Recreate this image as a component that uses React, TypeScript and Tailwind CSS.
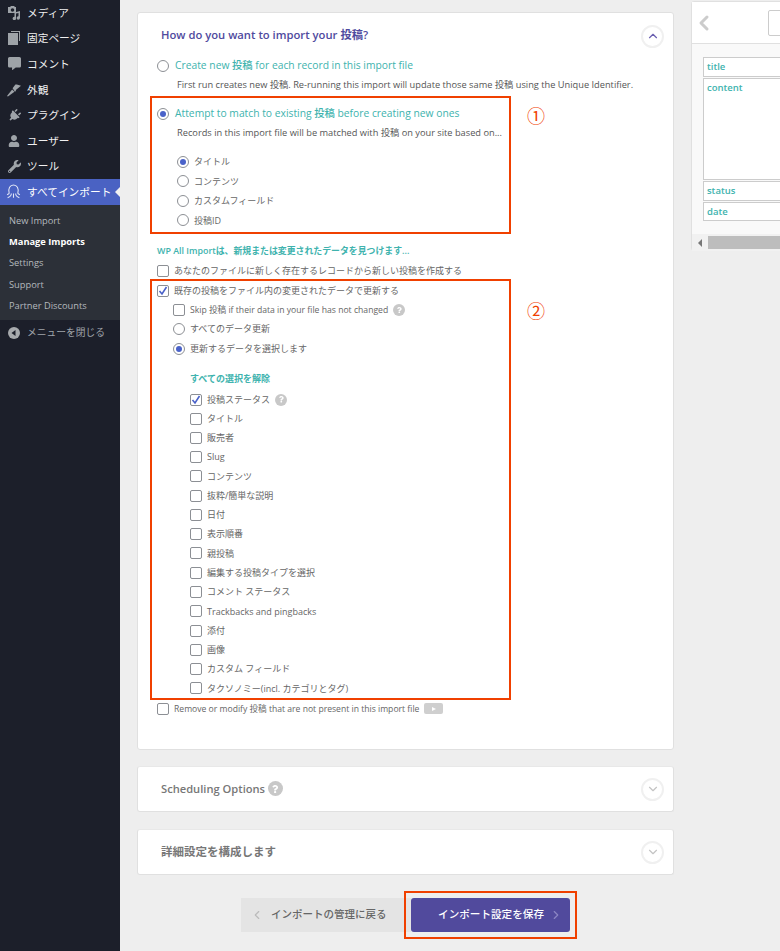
import React from 'react';
import { FaCommentAlt, FaPlug, FaUser, FaWrench, FaQuestion } from 'react-icons/fa';
import { ChevronLeft, ChevronRight, ChevronUp, ChevronDown } from 'lucide-react';

const font = 'font-["Open_Sans","Noto_Sans_CJK_JP",sans-serif]';

const MediaIcon = () => (
  <svg width="14" height="14" viewBox="0 0 14 14" fill="currentColor">
    <path fillRule="evenodd" d="M1 1h2l1-1h3l1 1h1v6H1zM5.500 2.200a1.800 1.800 0 1 0 0 3.600 1.800 1.800 0 0 0 0-3.600z" />
    <path d="M13 5v7a1.700 1.700 0 1 1-1.500-1.700V7L9 7.600v4.900A1.700 1.700 0 1 1 7.500 10.800V6.500z" />
  </svg>
);

const PagesIcon = () => (
  <svg width="14" height="14" viewBox="0 0 14 14" fill="currentColor">
    <path d="M4 0h9v10h-1V1H4z" />
    <path d="M1 2h10v12H1z" />
  </svg>
);

const BrushIcon = () => (
  <svg width="15" height="14" viewBox="0 0 15 14" fill="currentColor">
    <path d="M0 13.500l5.500-7 2.500 2.500-7 5z" />
    <path d="M6 5l3-4 1.500 0 4.500 1.500-5.500 4.500 0 1-1 1z" />
  </svg>
);

const menuItems = [
  { label: 'メディア', icon: <MediaIcon /> },
  { label: '固定ページ', icon: <PagesIcon /> },
  { label: 'コメント', icon: <FaCommentAlt size={13} /> },
  { label: '外観', icon: <BrushIcon /> },
  { label: 'プラグイン', icon: <FaPlug size={13} className="rotate-45" /> },
  { label: 'ユーザー', icon: <FaUser size={12} /> },
  { label: 'ツール', icon: <FaWrench size={13} /> },
];

const subItems = ['New Import', 'Manage Imports', 'Settings', 'Support', 'Partner Discounts'];

const fields = ['タイトル', '販売者', 'Slug', 'コンテンツ', '抜粋/簡単な説明', '日付', '表示順番', '親投稿', '編集する投稿タイプを選択', 'コメント ステータス', 'Trackbacks and pingbacks', '添付', '画像', 'カスタム フィールド', 'タクソノミー(incl. カテゴリとタグ)'];

const previewRows = [
  { label: 'title', h: 'h-[20px]' },
  { label: 'content', h: 'h-[102px]' },
  { label: 'status', h: 'h-[20px]' },
  { label: 'date', h: 'h-[19px]' },
];

const Radio = ({ on = false }: { on?: boolean }) => (
  <span className="w-[12px] h-[12px] shrink-0 rounded-full border border-[#8c8f94] bg-white flex items-center justify-center">
    {on && <span className="w-[6px] h-[6px] rounded-full bg-[#4a62c9]" />}
  </span>
);

const Check = ({ on = false }: { on?: boolean }) => (
  <span className="w-[12px] h-[12px] shrink-0 rounded-[2px] border border-[#8c8f94] bg-white flex items-center justify-center">
    {on && (
      <svg width="10" height="10" viewBox="0 0 10 10" fill="none">
        <path d="M1.500 5l2.500 3 4.500-7" stroke="#4a62c9" strokeWidth="1.600" />
      </svg>
    )}
  </span>
);

const Help = ({ size = 12 }: { size?: number }) => (
  <span className="rounded-full bg-[#c8c8c8] flex items-center justify-center text-white" style={{ width: size, height: size }}>
    <FaQuestion size={size * 0.55} />
  </span>
);

const Row = ({ className = '', children }: { className?: string; children: React.ReactNode }) => (
  <div className={`flex items-center gap-[5px] whitespace-nowrap text-[9px] text-[#666] ${className}`}>{children}</div>
);

const Collapsed = ({ className = '', children }: { className?: string; children: React.ReactNode }) => (
  <div className="h-[46px] bg-white rounded-[3px] border border-[#e0e0e0] border-t-[#e8e8e8] flex items-center pl-[23px] pr-[9px] justify-between">
    <div className={`flex items-center gap-[3px] font-semibold text-[#777] ${className}`}>{children}</div>
    <span className="w-[23px] h-[23px] rounded-full border-2 border-[#f0f0f0] flex items-center justify-center text-[#c4c4c4]">
      <ChevronDown size={14} />
    </span>
  </div>
);

export default function App() {
  return (
    <div className={`relative w-[780px] h-[951px] overflow-hidden bg-[#eeeeee] flex ${font}`}>
      {/* Sidebar */}
      <div className="w-[120px] shrink-0 bg-[#1c1f2a]">
        <div>
          {menuItems.map(({ label, icon }) => (
            <div key={label} className="h-[25.600px] flex items-center pl-[7px] gap-[6px] text-[10.700px] text-[#f0f0f1] whitespace-nowrap">
              <span className="w-[14px] flex justify-center text-[#9ea3a8]">{icon}</span>
              {label}
            </div>
          ))}
        </div>
        <div className="relative h-[26px] bg-[#4a62c3] flex items-center pl-[6px] gap-[6px] text-[10.700px] text-white whitespace-nowrap">
          <svg width="15" height="16" viewBox="0 0 14 15" fill="none" stroke="#dfe4f5" strokeWidth="1">
            <path d="M3 9C1.500 4 4 1 7 1s5.500 3 4 8" />
            <path d="M5 9c0 2-1 3-3.500 4M9 9c0 2 1 3 3.500 4M7 9v4M3 9l-2 1M11 9l2 1" />
          </svg>
          すべてインポート
          <span className="absolute right-0 top-[8px] w-0 h-0 border-y-[5px] border-y-transparent border-r-[5px] border-r-[#f0f0f1]" />
        </div>
        <div className="h-[115px] bg-[#2c3038] pt-[5px] text-[9.300px] text-[#b4b9be]">
          {subItems.map((s) => (
            <div key={s} className={`h-[21.300px] flex items-center pl-[9px] ${s === 'Manage Imports' ? 'font-bold text-white' : ''}`}>{s}</div>
          ))}
        </div>
        <div className="h-[26px] flex items-center pl-[8px] gap-[7px] text-[9.750px] text-[#a0a5aa]">
          <svg width="12" height="12" viewBox="0 0 12 12">
            <circle cx="6" cy="6" r="6" fill="#a7aaad" />
            <path d="M7.500 3v6L3.500 6z" fill="#1c1f2a" />
          </svg>
          メニューを閉じる
        </div>
      </div>

      {/* Main column */}
      <div className="w-[537px] ml-[17px] pt-[12px] shrink-0">
        <div className="h-[738px] bg-white rounded-[3px] border border-[#e0e0e0] pt-[13px] pl-[19px] pr-[9px]">
          <div className="flex items-center justify-between h-[20px]">
            <div className="pl-[4px] -mt-[1px] text-[11.250px] font-semibold text-[#4f4a9e]">How do you want to import your 投稿?</div>
            <span className="w-[23px] h-[23px] rounded-full border-2 border-[#f0f0f0] flex items-center justify-center text-[#6a5fb0]">
              <ChevronUp size={14} />
            </span>
          </div>

          <Row className="h-[20px] mt-[10px] !gap-[6px] !text-[10.300px] font-medium !text-[#40b3ae]"><Radio />Create new 投稿 for each record in this import file</Row>
          <Row className="h-[18px] pl-[20px] !text-[9.250px] !text-[#555]">First run creates new 投稿. Re-running this import will update those same 投稿 using the Unique Identifier.</Row>
          <Row className="h-[20px] mt-[10px] !gap-[6px] !text-[10.300px] font-medium !text-[#40b3ae]"><Radio on />Attempt to match to existing 投稿 before creating new ones</Row>
          <Row className="h-[18px] pl-[20px] !text-[9.250px] !text-[#555]">Records in this import file will be matched with 投稿 on your site based on...</Row>

          <div className="mt-[10px] pl-[20px]">
            <Row className="h-[19.500px]"><Radio on />タイトル</Row>
            <Row className="h-[19.500px]"><Radio />コンテンツ</Row>
            <Row className="h-[19.500px]"><Radio />カスタムフィールド</Row>
            <Row className="h-[19.500px]"><Radio />投稿ID</Row>
          </div>

          <div className="h-[20px] mt-[11px] flex items-center text-[8.900px] font-semibold text-[#40b3ae]">WP All Importは、新規または変更されたデータを見つけます...</div>
          <Row className="h-[20px]"><Check />あなたのファイルに新しく存在するレコードから新しい投稿を作成する</Row>
          <Row className="h-[20px]"><Check on />既存の投稿をファイル内の変更されたデータで更新する</Row>

          <div className="pl-[16px]">
            <Row className="h-[18px]"><Check /><span className="text-[8.650px]">Skip 投稿 if their data in your file has not changed</span> <Help /></Row>
            <Row className="h-[20px]"><Radio />すべてのデータ更新</Row>
            <Row className="h-[20px]"><Radio on />更新するデータを選択します</Row>
            <div className="pl-[17px]">
              <div className="h-[20px] mt-[10px] flex items-center text-[9px] font-semibold text-[#40b3ae]">すべての選択を解除</div>
              <Row className="h-[19px] mt-[1px]"><Check on />投稿ステータス <Help /></Row>
              {fields.map((f) => (
                <Row key={f} className="h-[19.270px]"><Check />{f}</Row>
              ))}
            </div>
          </div>

          <Row className="h-[20px] mt-[1px] !text-[8.600px]">
            <Check />Remove or modify 投稿 that are not present in this import file
            <span className="w-[19px] h-[11px] rounded-[2px] bg-[#cfcfcf] flex items-center justify-center">
              <span className="w-0 h-0 border-y-[2.500px] border-y-transparent border-l-[4px] border-l-white" />
            </span>
          </Row>
        </div>

        <div className="mt-[16px]"><Collapsed className="text-[11.150px]">Scheduling Options <Help size={15} /></Collapsed></div>
        <div className="mt-[17px]"><Collapsed className="text-[11.500px]">詳細設定を構成します</Collapsed></div>

        <div className="mt-[23px] flex justify-center">
          <div className="w-[170px] h-[34px] bg-[#e4e4e4] flex items-center pl-[9px] gap-[7px] text-[10.500px] font-medium text-[#666]">
            <ChevronLeft size={14} className="text-[#bbb]" />インポートの管理に戻る
          </div>
          <div className="w-[159px] h-[34px] bg-[#514a9d] rounded-[3px] flex items-center justify-end pr-[7px] gap-[5px] text-[10.600px] font-medium text-white">
            インポート設定を保存<ChevronRight size={14} className="text-[#8c86c4]" />
          </div>
        </div>
      </div>

      {/* Preview panel */}
      <div className="ml-[17px] mt-[1px] w-[120px] h-[250px] shrink-0 bg-[#f9f9f9] border border-[#e0e0e0] rounded-l-[3px]">
        <div className="h-[42px] bg-white border-b border-[#e0e0e0] flex items-center relative">
          <ChevronLeft size={24} strokeWidth={3} className="text-[#ccc]" />
          <span className="absolute left-[76px] top-[8px] w-[20px] h-[26px] rounded-[2px] border border-[#ccc]" />
        </div>
        <div className="pt-[13px] pl-[11px] flex flex-col gap-[1px]">
          {previewRows.map((r) => (
            <div key={r.label} className={`${r.h} bg-white border border-[#ccc] border-r-0 pl-[3px] text-[9.500px] font-semibold text-[#40b3ae] flex items-start pt-[2px]`}>{r.label}</div>
          ))}
        </div>
        <div className="mt-[13px] h-[17px] bg-[#f1f1f1] flex items-center pl-[6px] gap-[6px]">
          <span className="w-0 h-0 border-y-[4px] border-y-transparent border-r-[4px] border-r-[#777]" />
          <span className="flex-1 h-[13px] bg-[#bdbdbd]" />
        </div>
      </div>

      {/* Annotations */}
      <div className="absolute left-[150px] top-[96px] w-[361px] h-[138px] border-2 border-[#f04000]" />
      <div className="absolute left-[150px] top-[279px] w-[361px] h-[421px] border-2 border-[#f04000]" />
      <div className="absolute left-[404px] top-[891px] w-[173px] h-[48px] border-2 border-[#f04000]" />
      <div className="absolute left-[527px] top-[104px] text-[18px] leading-[24px] text-[#f04000]">①</div>
      <div className="absolute left-[527px] top-[299px] text-[18px] leading-[24px] text-[#f04000]">②</div>
    </div>
  );
}
